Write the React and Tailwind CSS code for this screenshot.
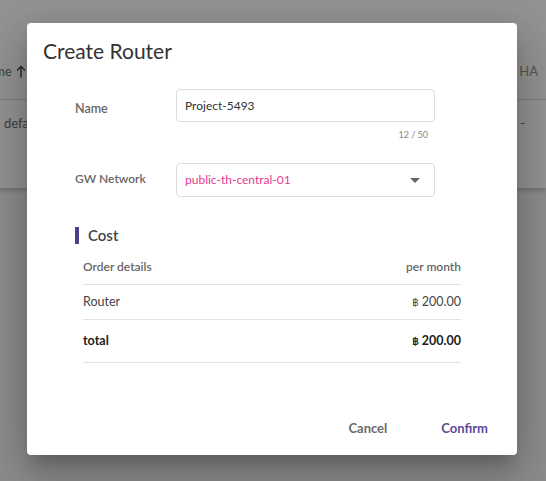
import React from 'react';

const font = { fontFamily: 'Lato, "Noto Sans", sans-serif' };

const Baht = ({ value }) => (
  <span>
    <span className="text-[10px]">฿</span> {value}
  </span>
);

const CostRow = ({ label, amount, bold, height }) => (
  <div className={`flex items-center justify-between border-b border-[#e2e2e2] text-[12.5px] ${height} ${bold ? 'font-bold text-[#222]' : 'text-[#444]'}`}>
    <span>{label}</span>
    <Baht value={amount} />
  </div>
);

export default function App() {
  return (
    <div className="relative w-full h-[481px] overflow-hidden bg-[#8c8d8f]" style={font}>
      {/* dimmed page behind the dialog */}
      <div className="h-[188px] bg-[#939393] shadow-[0_3px_4px_rgba(0,0,0,0.18)] text-[13px]">
        <div className="h-[44px]" />
        <div className="flex h-[56px] items-center justify-between border-b border-[#7a7a7a] text-[#3e3e3e]">
          <span className="-ml-[22px] flex items-center gap-[4px]">
            Name
            <svg width="10" height="13" viewBox="0 0 10 13" fill="none" stroke="#333" strokeWidth="1.6">
              <path d="M5 12.5V1.5M1 5.5L5 1.5l4 4" />
            </svg>
          </span>
          <span className="pr-[8px] text-[#555]">HA</span>
        </div>
        <div className="flex h-[48px] items-center justify-between text-[#3e3e3e]">
          <span className="pl-[4px]">default</span>
          <span className="pr-[21px]">-</span>
        </div>
      </div>

      {/* dialog */}
      <div className="absolute left-[27px] top-[23px] flex h-[432px] w-[490px] flex-col rounded-[4px] bg-white shadow-[0_11px_15px_-7px_rgba(0,0,0,0.2),0_24px_38px_3px_rgba(0,0,0,0.14),0_9px_46px_8px_rgba(0,0,0,0.12)]">
        <h1 className="px-4 pt-3 text-[21px] leading-8 text-[#333]">Create Router</h1>

        <div className="mt-[22px] pl-[48px]">
          {/* Name */}
          <div className="flex">
            <label className="w-[101px] pt-[12px] text-[12.5px] leading-4 font-semibold text-[#666]">Name</label>
            <div className="flex h-[33px] w-[259px] items-center rounded-[4px] border border-[#dcdcdc] px-2 text-[12px] text-[#333]">
              Project-5493
            </div>
          </div>
          <div className="mt-[6px] w-[360px] pr-[7px] text-right text-[9px] leading-[14px] text-[#888]">12 / 50</div>

          {/* GW Network */}
          <div className="mt-[21px] flex">
            <label className="w-[101px] pt-[8px] text-[12px] leading-4 font-semibold text-[#666]">GW Network</label>
            <div className="flex h-[34px] w-[259px] items-center justify-between rounded-[4px] border border-[#dcdcdc] pl-2 pr-[14px] text-[12px] text-[#e8388f]">
              <span>public-th-central-01</span>
              <svg width="10" height="5" viewBox="0 0 10 5">
                <path d="M0 0h10L5 5z" fill="#666" />
              </svg>
            </div>
          </div>

          {/* Cost */}
          <div className="mt-[30px] flex h-[17px] items-center">
            <span className="h-[17px] w-[4px] bg-[#4b3f87]" />
            <span className="ml-[9px] text-[15px] font-semibold text-[#444]">Cost</span>
          </div>

          <div className="ml-[8px] mt-[6px] w-[378px]">
            <div className="flex h-[35px] items-center justify-between border-b border-[#e2e2e2] text-[12px] font-semibold text-[#666]">
              <span>Order details</span>
              <span>per month</span>
            </div>
            <CostRow label="Router" amount="200.00" height="h-[35px]" />
            <CostRow label="total" amount="200.00" height="h-[43px]" bold />
          </div>
        </div>

        <div className="mt-auto flex justify-end gap-[22px] pb-[8px] pr-[13px]">
          <button type="button" className="h-[36px] px-4 text-[13px] font-bold text-[#6b6b6b]">Cancel</button>
          <button type="button" className="h-[36px] px-4 text-[13px] font-bold text-[#5b4a9b]">Confirm</button>
        </div>
      </div>
    </div>
  );
}
